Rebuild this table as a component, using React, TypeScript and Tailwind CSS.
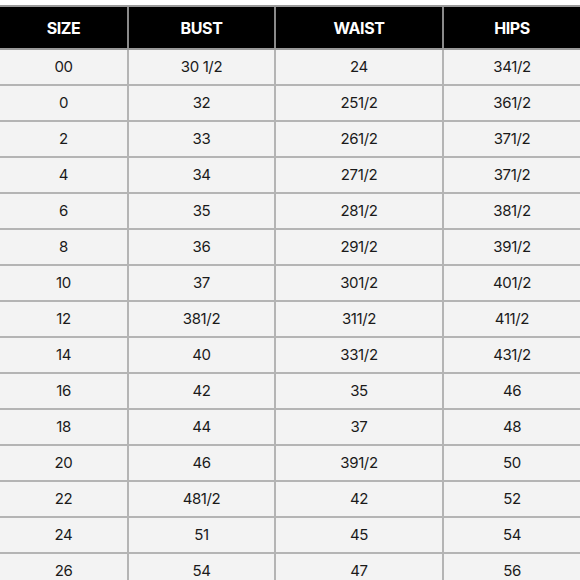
const rows = [
  ["00", "30 1/2", "24", "341/2"],
  ["0", "32", "251/2", "361/2"],
  ["2", "33", "261/2", "371/2"],
  ["4", "34", "271/2", "371/2"],
  ["6", "35", "281/2", "381/2"],
  ["8", "36", "291/2", "391/2"],
  ["10", "37", "301/2", "401/2"],
  ["12", "381/2", "311/2", "411/2"],
  ["14", "40", "331/2", "431/2"],
  ["16", "42", "35", "46"],
  ["18", "44", "37", "48"],
  ["20", "46", "391/2", "50"],
  ["22", "481/2", "42", "52"],
  ["24", "51", "45", "54"],
  ["26", "54", "47", "56"],
];

const headers = ["SIZE", "BUST", "WAIST", "HIPS"];
const cols = "grid grid-cols-[127px_147px_168px_138px]";

export default function App() {
  return (
    <div className="w-[580px] h-[580px] overflow-hidden bg-white pt-[5px] font-['Inter','Noto_Sans',sans-serif]">
      {/* header */}
      <div className={`${cols} h-[45px] bg-black border-y-2 border-[#9a9a9a]`}>
        {headers.map((h, i) => (
          <div
            key={h}
            className={`flex items-center justify-center text-white font-bold text-[16px] tracking-tight ${
              i > 0 ? "border-l-2 border-[#8a8a8a]" : ""
            }`}
          >
            {h}
          </div>
        ))}
      </div>

      {/* rows */}
      {rows.map((r, ri) => (
        <div key={ri} className={`${cols} h-[36px] bg-[#f3f3f3] border-b-2 border-[#b4b4b4]`}>
          {r.map((c, ci) => (
            <div
              key={ci}
              className={`flex items-center justify-center text-[#1a1a1a] text-[15px] tracking-tight ${
                ci > 0 ? "border-l-2 border-[#b4b4b4]" : ""
              }`}
            >
              {c}
            </div>
          ))}
        </div>
      ))}
    </div>
  );
}
